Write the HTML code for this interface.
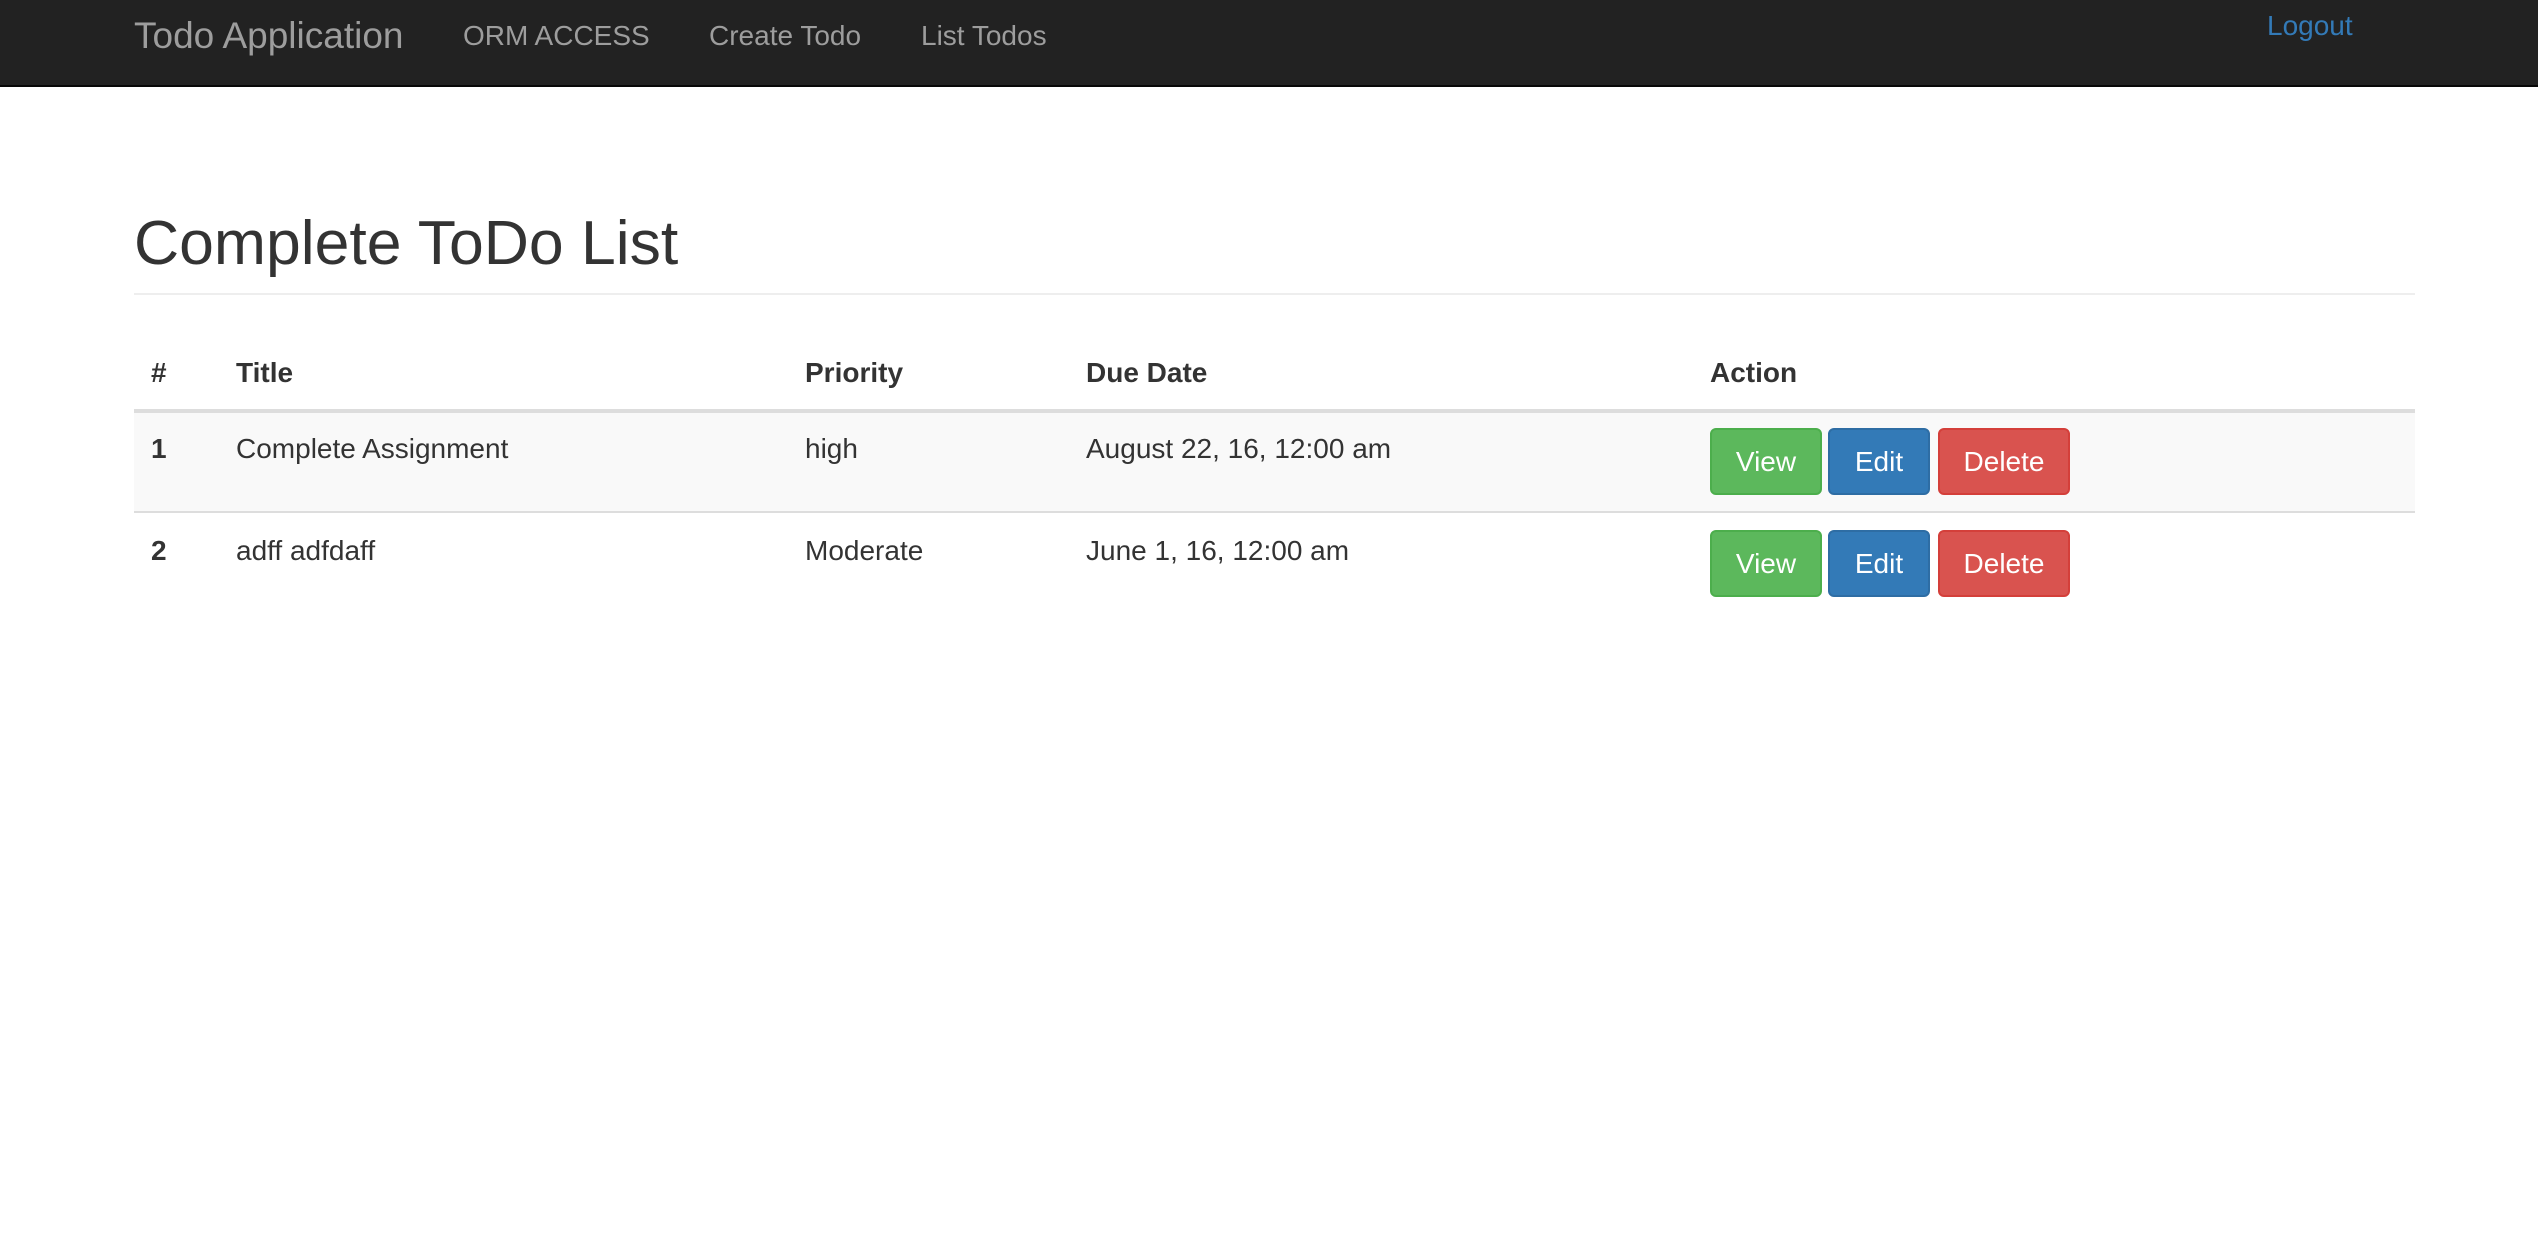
<!DOCTYPE html>
<html><head><meta charset="utf-8"><style>
*{margin:0;padding:0;box-sizing:border-box}
body{width:2538px;height:1256px;background:#fff;font-family:"Liberation Sans",Arial,sans-serif;color:#333;position:relative;overflow:hidden}
.a{position:absolute;white-space:nowrap;line-height:1}
.nav{position:absolute;left:0;top:0;width:2538px;height:87px;background:#222;border-bottom:2px solid #080808}
.btn{position:absolute;height:67px;border-radius:6px;color:#fff;font-size:28px;display:flex;align-items:center;justify-content:center;border:2px solid}
.g{background:#5cb85c;border-color:#4cae4c}
.b{background:#337ab7;border-color:#2e6da4}
.r{background:#d9534f;border-color:#d43f3a}
</style></head><body>
<div class="nav"></div>
<div class="a" style="left:134px;top:17px;font-size:37px;color:#9d9d9d">Todo Application</div>
<div class="a" style="left:463px;top:22px;font-size:28px;color:#9d9d9d">ORM ACCESS</div>
<div class="a" style="left:709px;top:22px;font-size:28px;color:#9d9d9d">Create Todo</div>
<div class="a" style="left:921px;top:22px;font-size:28px;color:#9d9d9d">List Todos</div>
<div class="a" style="left:2267px;top:12px;font-size:28px;color:#337ab7">Logout</div>

<div class="a" style="left:134px;top:212px;font-size:62.5px;color:#333">Complete ToDo List</div>
<div style="position:absolute;left:134px;top:293px;width:2281px;height:2px;background:#eee"></div>

<div class="a" style="left:151px;top:359px;font-size:28px;font-weight:bold">#</div>
<div class="a" style="left:236px;top:359px;font-size:28px;font-weight:bold">Title</div>
<div class="a" style="left:805px;top:359px;font-size:28px;font-weight:bold">Priority</div>
<div class="a" style="left:1086px;top:359px;font-size:28px;font-weight:bold">Due Date</div>
<div class="a" style="left:1710px;top:359px;font-size:28px;font-weight:bold">Action</div>
<div style="position:absolute;left:134px;top:409px;width:2281px;height:4px;background:#ddd"></div>
<div style="position:absolute;left:134px;top:413px;width:2281px;height:98px;background:#f9f9f9"></div>
<div style="position:absolute;left:134px;top:511px;width:2281px;height:2px;background:#ddd"></div>

<div class="a" style="left:151px;top:435px;font-size:28px;font-weight:bold">1</div>
<div class="a" style="left:236px;top:435px;font-size:28px">Complete Assignment</div>
<div class="a" style="left:805px;top:435px;font-size:28px">high</div>
<div class="a" style="left:1086px;top:435px;font-size:28px">August 22, 16, 12:00 am</div>
<div class="btn g" style="left:1710px;top:428px;width:112px">View</div>
<div class="btn b" style="left:1828px;top:428px;width:102px">Edit</div>
<div class="btn r" style="left:1938px;top:428px;width:132px">Delete</div>

<div class="a" style="left:151px;top:537px;font-size:28px;font-weight:bold">2</div>
<div class="a" style="left:236px;top:537px;font-size:28px">adff adfdaff</div>
<div class="a" style="left:805px;top:537px;font-size:28px">Moderate</div>
<div class="a" style="left:1086px;top:537px;font-size:28px">June 1, 16, 12:00 am</div>
<div class="btn g" style="left:1710px;top:530px;width:112px">View</div>
<div class="btn b" style="left:1828px;top:530px;width:102px">Edit</div>
<div class="btn r" style="left:1938px;top:530px;width:132px">Delete</div>
</body></html>
